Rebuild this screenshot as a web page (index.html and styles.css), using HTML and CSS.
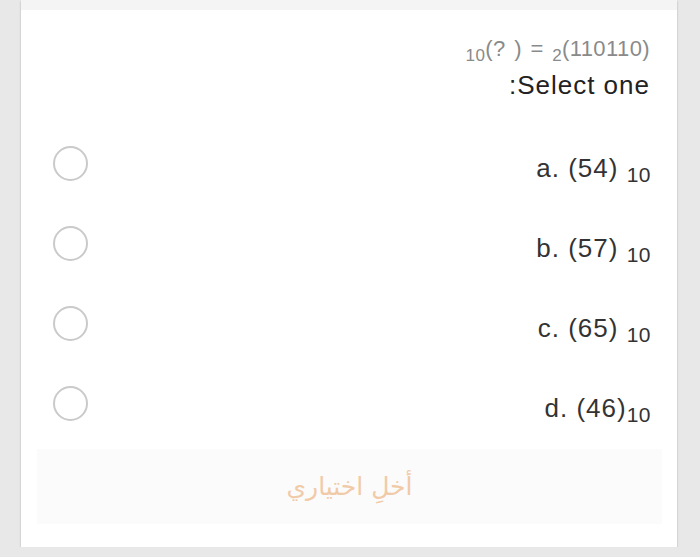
FILE: index.html
```html
<!DOCTYPE html>
<html lang="ar">
<head>
<meta charset="utf-8">
<link rel="stylesheet" href="styles.css">
</head>
<body>
<div class="card">
  <div class="strip"></div>
  <div class="question">
    <div class="formula"><span class="sub">10</span>(? ) = <span class="sub">2</span>(110110)</div>
    <div class="prompt">:Select one</div>
  </div>
  <div class="options">
    <div class="option"><span class="radio"></span><span class="label">a. (54) <span class="lsub">10</span></span></div>
    <div class="option"><span class="radio"></span><span class="label">b. (57) <span class="lsub">10</span></span></div>
    <div class="option"><span class="radio"></span><span class="label">c. (65) <span class="lsub">10</span></span></div>
    <div class="option"><span class="radio"></span><span class="label">d. (46)<span class="lsub">10</span></span></div>
  </div>
  <div class="clear"><span dir="rtl">أخلِ اختياري</span></div>
</div>
</body>
</html>
```
FILE: styles.css
```css
html, body {
  margin: 0;
  padding: 0;
  background: #e8e8e8;
  font-family: "Liberation Sans", Arial, sans-serif;
}
.card {
  margin-left: 21px;
  width: 656px;
  height: 547px;
  background: #fff;
  box-shadow: 0 1px 2px rgba(0,0,0,0.25);
  display: flex;
  flex-direction: column;
}
.strip {
  height: 10px;
  background: #f4f4f4;
}
.question {
  height: 113px;
  box-sizing: border-box;
  padding-right: 27px;
  padding-top: 25px;
  text-align: right;
}
.formula {
  font-size: 22px;
  color: #8a8a8a;
  line-height: 28px;
  letter-spacing: 0.4px;
  word-spacing: 2px;
}
.sub {
  font-size: 17px;
  position: relative;
  top: 5px;
}
.prompt {
  font-size: 26px;
  color: #222;
  line-height: 36px;
  margin-top: 2px;
  letter-spacing: 1px;
}
.options {
  display: flex;
  flex-direction: column;
}
.option {
  height: 80px;
  display: flex;
  align-items: center;
  justify-content: space-between;
  padding-left: 32px;
  padding-right: 26px;
}
.radio {
  width: 31px;
  height: 31px;
  border: 2px solid #cacaca;
  border-radius: 50%;
}
.label {
  font-size: 26px;
  color: #333;
  letter-spacing: 1px;
  margin-top: 10px;
}
.lsub {
  font-size: 21px;
  position: relative;
  top: 5px;
  letter-spacing: 0.5px;
}
.clear {
  margin: 6px 15px 0 16px;
  height: 75px;
  background: #fbfbfb;
  display: flex;
  align-items: center;
  justify-content: center;
  font-size: 25px;
  color: #f1caa8;
  font-family: "DejaVu Sans", "Noto Sans", sans-serif;
}
```
